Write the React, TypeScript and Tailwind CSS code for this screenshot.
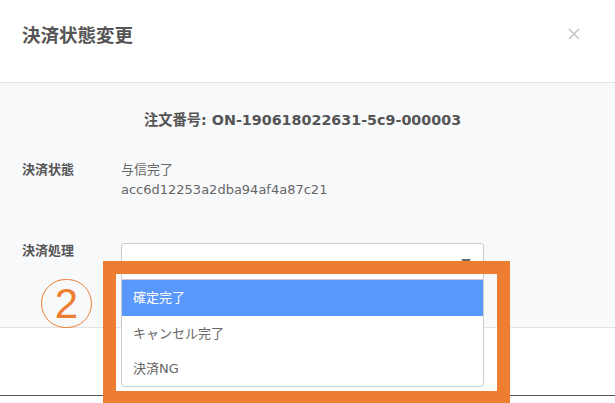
import React from "react";

export default function App() {
  return (
    <div className="relative w-[615px] h-[403px] overflow-hidden bg-white font-['DejaVu_Sans','Noto_Sans_CJK_JP',sans-serif]">
      {/* Header */}
      <div className="h-[82px] flex items-start justify-between pl-[22px] pr-[35px] pt-[25px]">
        <div className="text-[18.5px] leading-[22px] font-bold text-[#555]">決済状態変更</div>
        <svg width="12" height="12" viewBox="0 0 12 12" className="mt-[3px]">
          <path d="M1 1L11 11M11 1L1 11" stroke="#c4c4c4" strokeWidth="1.6" />
        </svg>
      </div>
      {/* Body */}
      <div className="h-[246px] border-y border-[#e3e3e3] bg-[#f8f9fb] pt-[27px]">
        <div className="text-center text-[14.3px] leading-[20px] font-bold text-[#555] pr-[10px]">
          注文番号: ON-190618022631-5c9-000003
        </div>
        <div className="flex mt-[30px] px-[22px]">
          <div className="w-[99px] text-[13px] leading-[20px] font-bold text-[#555]">決済状態</div>
          <div className="text-[13px] leading-[20px] text-[#666]">
            <div>与信完了</div>
            <div>acc6d12253a2dba94af4a87c21</div>
          </div>
        </div>
        <div className="flex items-start mt-[41px] px-[22px]">
          <div className="w-[99px] text-[13px] leading-[20px] font-bold text-[#555]">決済処理</div>
          <div className="relative mt-[2px] w-[363px] h-[38px] bg-white border border-[#cccccc] rounded-[3px]">
            <div className="absolute right-[12px] top-[15px] w-0 h-0 border-l-[5px] border-r-[5px] border-t-[6px] border-l-transparent border-r-transparent border-t-[#666]" />
          </div>
        </div>
      </div>
      {/* Footer */}
      <div className="h-[67px]" />
      <div className="border-t border-[#555]" />

      {/* Dropdown menu */}
      <div className="absolute left-[121px] top-[279px] w-[363px] bg-white border border-[#cccccc] rounded-b-[4px] text-[13px]">
        <div className="h-[36px] flex items-center pl-[11px] bg-[#5897fb] text-white">確定完了</div>
        <div className="h-[35px] flex items-center pl-[11px] text-[#666]">キャンセル完了</div>
        <div className="h-[35px] flex items-center pl-[11px] text-[#666]">決済NG</div>
      </div>

      {/* Annotation box */}
      <div className="absolute left-[103px] top-[261px] w-[407px] h-[143px] border-[13px] border-[#ed7d31]" />

      {/* Circled number */}
      <div className="absolute left-[41px] top-[279px] w-[51px] h-[49px] rounded-full border-[1.5px] border-[#ed7d31] flex items-center justify-center text-[#ed7d31] text-[42px] leading-none font-['Liberation_Sans',sans-serif]">
        2
      </div>
    </div>
  );
}
